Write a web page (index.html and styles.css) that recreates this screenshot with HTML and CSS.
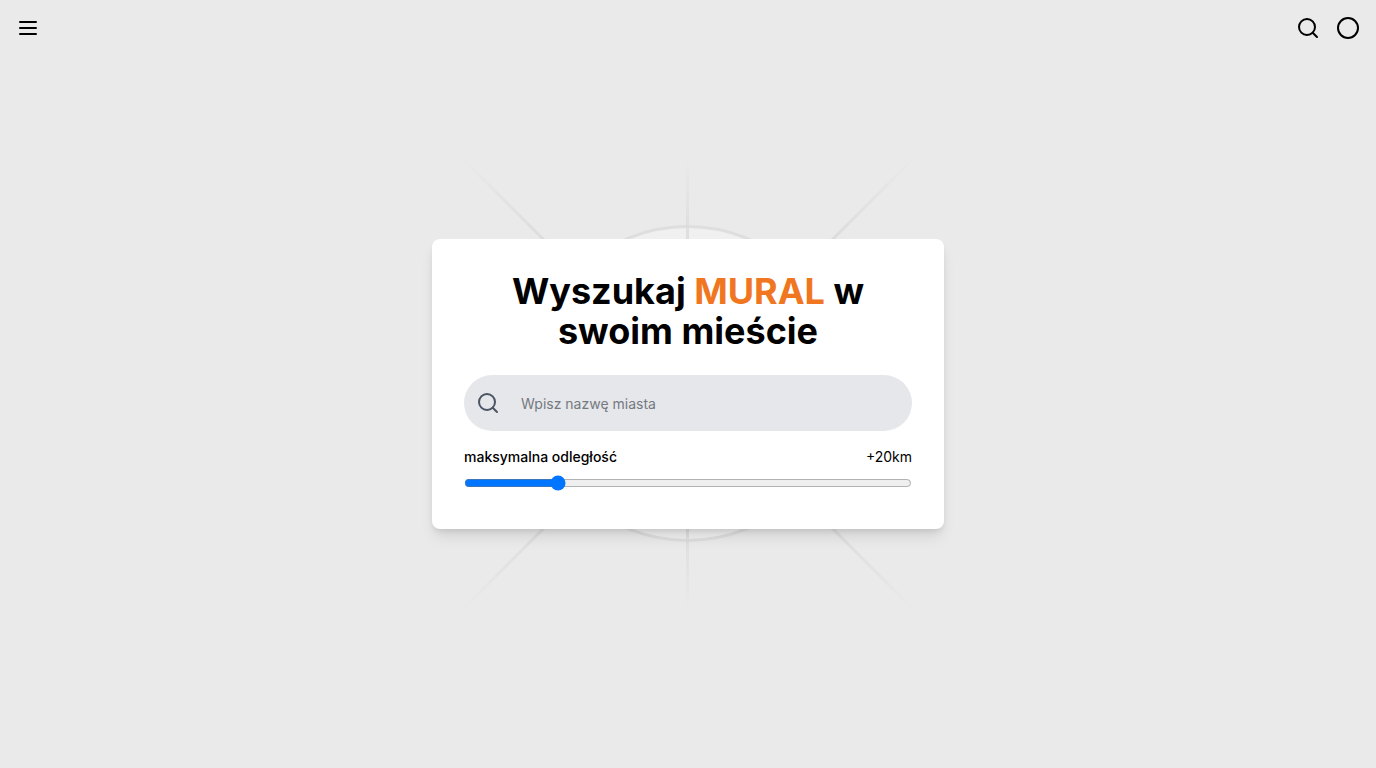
FILE: index.html
```html
<!DOCTYPE html>
<html lang="pl">
<head>
<meta charset="utf-8">
<meta name="viewport" content="width=device-width, initial-scale=1">
<title>Wyszukaj mural</title>
<link rel="stylesheet" href="styles.css">
</head>
<body>
<header class="topbar">
  <button class="icon-button" type="button" aria-label="Menu">
    <svg class="icon" viewBox="0 0 24 24"><path d="M4 6h16M4 12h16M4 18h16"/></svg>
  </button>
  <div class="actions">
    <button class="icon-button" type="button" aria-label="Szukaj">
      <svg class="icon" viewBox="0 0 24 24"><circle cx="11" cy="11" r="8"/><path d="m21 21-4.3-4.3"/></svg>
    </button>
    <button class="icon-button" type="button" aria-label="Profil">
      <svg class="icon" viewBox="0 0 24 24"><circle cx="12" cy="12" r="10"/></svg>
    </button>
  </div>
</header>
<main class="stage">
  <svg class="backdrop" viewBox="0 0 448 448" aria-hidden="true">
    <defs>
      <radialGradient id="ray" gradientUnits="userSpaceOnUse" cx="224" cy="224" r="320">
        <stop offset="0.6" stop-color="#dbdbdb"/>
        <stop offset="1" stop-color="#dbdbdb" stop-opacity="0"/>
      </radialGradient>
      <linearGradient id="axis" gradientUnits="userSpaceOnUse" x1="0" y1="0" x2="0" y2="448">
        <stop offset="0" stop-color="#dbdbdb" stop-opacity="0"/>
        <stop offset="0.2" stop-color="#dbdbdb"/>
        <stop offset="0.8" stop-color="#dbdbdb"/>
        <stop offset="1" stop-color="#dbdbdb" stop-opacity="0"/>
      </linearGradient>
    </defs>
    <circle class="disc" cx="223.5" cy="223.5" r="157"/>
    <path class="ray" d="M0 0 448 448M448 0 0 448"/>
    <path class="axis" d="M222 0h3v448h-3z"/>
  </svg>
  <form class="card">
    <h1 class="title">Wyszukaj <span class="accent">MURAL</span> w swoim mieście</h1>
    <div class="search">
      <label class="search-label" for="city" aria-label="Miasto">
        <svg class="icon" viewBox="0 0 24 24"><circle cx="11" cy="11" r="8"/><path d="m21 21-4.3-4.3"/></svg>
      </label>
      <input class="search-input" id="city" type="text" placeholder="Wpisz nazwę miasta">
    </div>
    <div class="range-head">
      <label class="range-label" for="distance">maksymalna odległość</label>
      <output for="distance">+20km</output>
    </div>
    <input class="range" id="distance" type="range" min="0" max="100" value="20">
  </form>
</main>
</body>
</html>
```
FILE: styles.css
```css
* { box-sizing: border-box; }
body {
  margin: 0;
  min-height: 100vh;
  display: grid;
  background: #eaeaea;
  color: #000;
  font: 14px/20px Inter, sans-serif;
}
.topbar, .stage { grid-area: 1 / 1; }
.topbar {
  display: flex;
  justify-content: space-between;
  align-self: start;
  z-index: 1;
  padding: 16px;
}
.actions { display: flex; gap: 16px; }
.icon-button {
  display: flex;
  padding: 0;
  border: 0;
  background: none;
  color: inherit;
}
.icon {
  width: 24px;
  height: 24px;
  fill: none;
  stroke: currentColor;
  stroke-width: 2;
  stroke-linecap: round;
  stroke-linejoin: round;
}
.stage { display: grid; place-items: center; }
.backdrop, .card { grid-area: 1 / 1; }
.backdrop { width: 448px; height: 448px; }
.disc { fill: #f0f0f0; stroke: #dedede; stroke-width: 3; }
.ray { stroke: url(#ray); stroke-width: 3; }
.axis { fill: url(#axis); }
.card {
  z-index: 1;
  width: 100%;
  max-width: 512px;
  padding: 32px;
  border-radius: 8px;
  background: #fff;
  box-shadow: 0 10px 15px -3px rgb(0 0 0 / 0.1), 0 4px 6px -2px rgb(0 0 0 / 0.1);
}
.title {
  margin: 0 0 24px;
  font-size: 36px;
  line-height: 40px;
  font-weight: 700;
  text-align: center;
}
.accent { color: #f0761f; }
.search {
  display: flex;
  align-items: center;
  height: 56px;
  margin-bottom: 16px;
  padding: 0 12px;
  border-radius: 28px;
  background: #e5e7eb;
}
.search-label { display: flex; color: #4b5563; }
.search-input {
  flex: 1;
  min-width: 0;
  height: 40px;
  margin-left: 8px;
  padding: 0 12px;
  border: 1px solid transparent;
  outline: 0;
  background: none;
  color: inherit;
  font: inherit;
}
.search-input::placeholder { color: #757980; }
.range-head { display: flex; justify-content: space-between; margin-bottom: 8px; }
.range-label { font-weight: 500; }
.range { display: block; width: 100%; height: 16px; margin: 0 0 6px; }
```
